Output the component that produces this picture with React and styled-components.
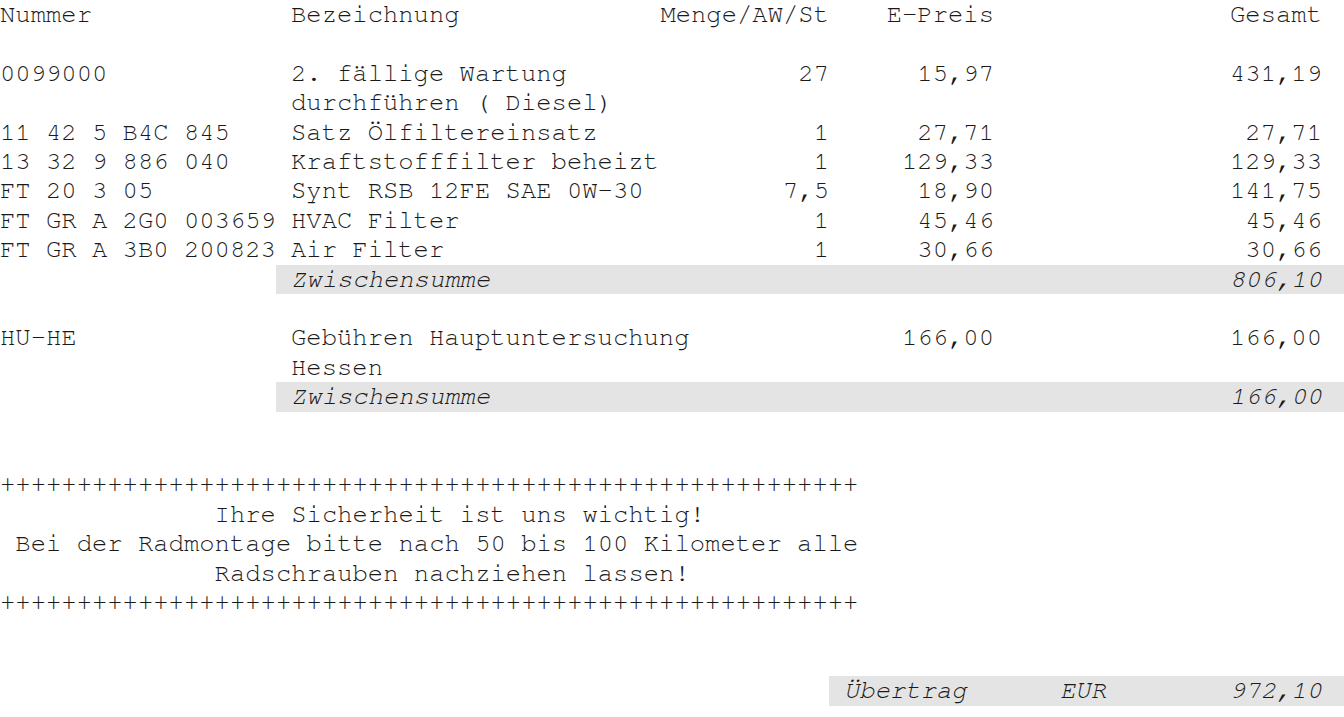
import React from 'react';
import styled, { createGlobalStyle } from 'styled-components';

const LINE = '29.4px';

const GlobalStyle = createGlobalStyle`
	html, body {
		margin: 0;
		padding: 0;
		background: #fff;
	}
	body {
		font-family: 'Nimbus Mono PS', 'FreeMono', 'Liberation Mono', 'Courier New', monospace;
		font-size: 25.55px;
		line-height: ${LINE};
		color: #1a1a1a;
	}
`;

const Sheet = styled.div`
	width: 1344px;
	display: flex;
	flex-direction: column;
`;

const Row = styled.div`
	display: grid;
	grid-template-columns: 276px 429px 124px 165px 1fr;
	margin-bottom: ${(p) => (p.gap ? `calc(${LINE} * ${p.gap})` : '0')};
`;

const Cell = styled.div`
	white-space: nowrap;
	display: flex;
	justify-content: ${(p) => (p.right ? 'flex-end' : 'flex-start')};
	padding-left: ${(p) => (p.indent ? '15px' : '0')};
	padding-right: ${(p) => (p.last ? '22px' : '0')};
`;

const Desc = styled.div`
	padding-left: 15px;
	white-space: normal;
`;

const Shaded = styled.div`
	grid-column: ${(p) => p.from} / -1;
	background: #e4e4e4;
	font-style: italic;
	display: grid;
	grid-template-columns: ${(p) => p.cols || '1fr auto'};
	padding: 0 22px 0 15px;
`;

const Notice = styled.pre`
	margin: 0 0 calc(${LINE} * 2) 0;
	font: inherit;
	line-height: inherit;
`;

const items = [
	{ nr: '0099000', desc: '2. fällige Wartung durchführen ( Diesel)', qty: '27', price: '15,97', total: '431,19' },
	{ nr: '11 42 5 B4C 845', desc: 'Satz Ölfiltereinsatz', qty: '1', price: '27,71', total: '27,71' },
	{ nr: '13 32 9 886 040', desc: 'Kraftstofffilter beheizt', qty: '1', price: '129,33', total: '129,33' },
	{ nr: 'FT 20 3 05', desc: 'Synt RSB 12FE SAE 0W-30', qty: '7,5', price: '18,90', total: '141,75' },
	{ nr: 'FT GR A 2G0 003659', desc: 'HVAC Filter', qty: '1', price: '45,46', total: '45,46' },
	{ nr: 'FT GR A 3B0 200823', desc: 'Air Filter', qty: '1', price: '30,66', total: '30,66' }
];

const plus = '+'.repeat(56);
const notice = [
	plus,
	'              Ihre Sicherheit ist uns wichtig!',
	' Bei der Radmontage bitte nach 50 bis 100 Kilometer alle',
	'              Radschrauben nachziehen lassen!',
	plus
].join('\n');

const Item = ({ nr, desc, qty, price, total }) => (
	<Row>
		<Cell>{nr}</Cell>
		<Desc>{desc}</Desc>
		<Cell right>{qty}</Cell>
		<Cell right>{price}</Cell>
		<Cell right last>{total}</Cell>
	</Row>
);

const Subtotal = ({ amount, gap }) => (
	<Row gap={gap}>
		<Shaded from={2}>
			<span>Zwischensumme</span>
			<span>{amount}</span>
		</Shaded>
	</Row>
);

export default function App() {
	return (
		<>
			<GlobalStyle />
			<Sheet>
				<Row gap={1}>
					<Cell>Nummer</Cell>
					<Cell indent>Bezeichnung</Cell>
					<Cell right>Menge/AW/St</Cell>
					<Cell right>E-Preis</Cell>
					<Cell right last>Gesamt</Cell>
				</Row>

				{items.map((it, i) => (
					<Item key={`item_${i}`} {...it} />
				))}
				<Subtotal amount="806,10" gap={1} />

				<Item nr="HU-HE" desc="Gebühren Hauptuntersuchung Hessen" qty="" price="166,00" total="166,00" />
				<Subtotal amount="166,00" gap={2} />

				<Notice>{notice}</Notice>

				<Row>
					<Shaded from={4} cols="216px auto 1fr">
						<span>Übertrag</span>
						<span>EUR</span>
						<span style={{ textAlign: 'right' }}>972,10</span>
					</Shaded>
				</Row>
			</Sheet>
		</>
	);
}
